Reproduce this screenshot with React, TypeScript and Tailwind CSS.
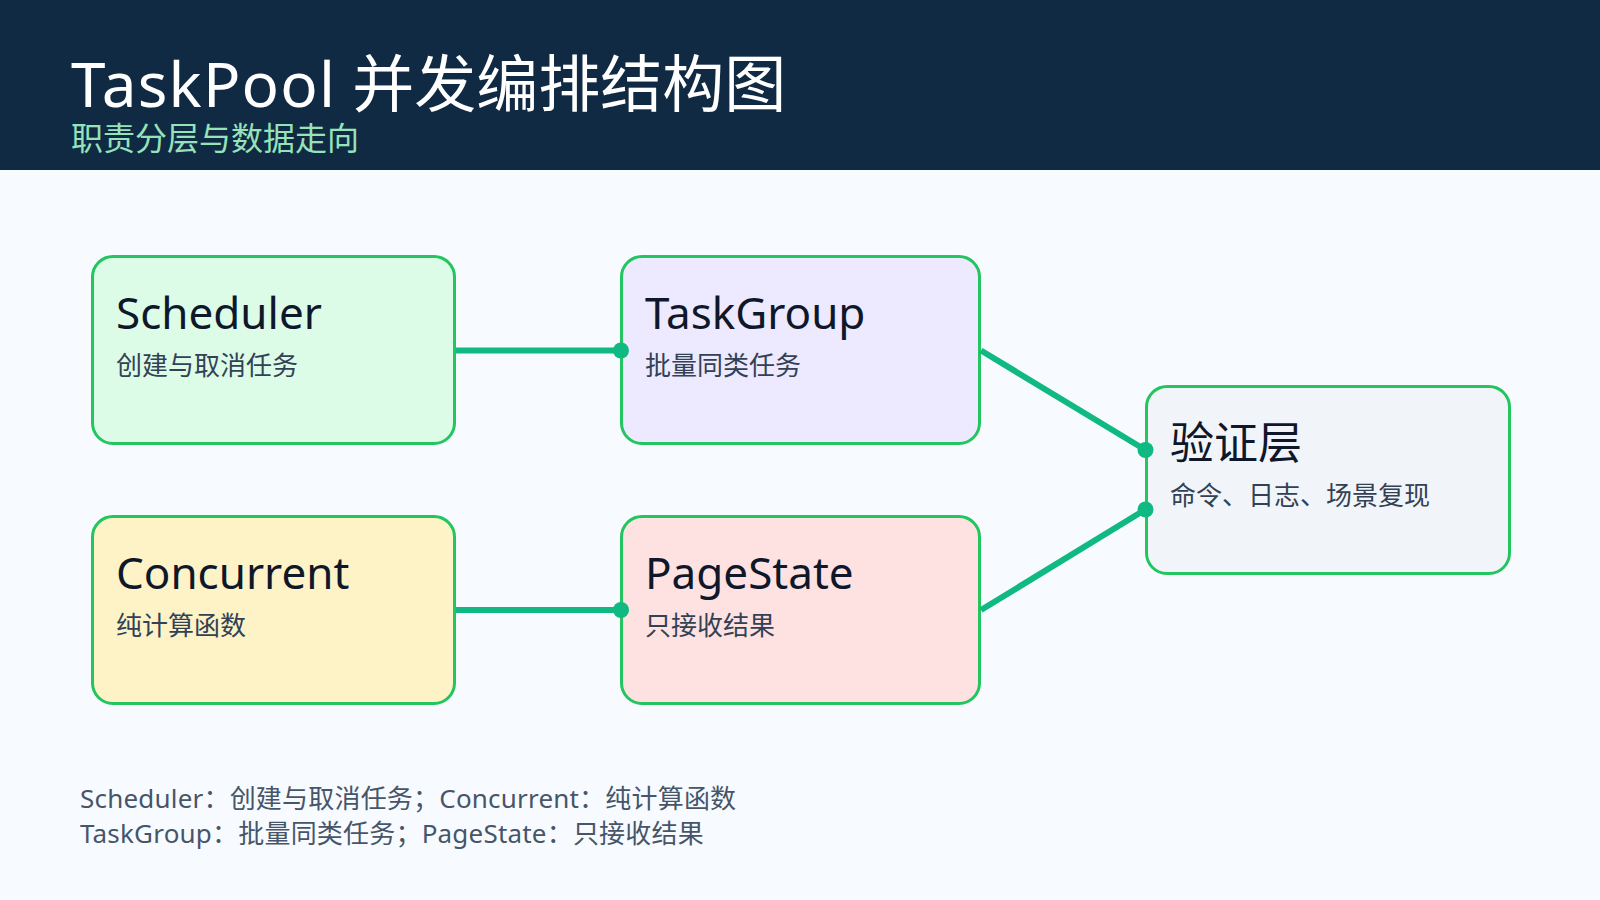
const FONT = "font-['Noto_Sans','Noto_Sans_CJK_SC',sans-serif]";

type NodeProps = {
  title: string;
  desc: string;
  className: string;
};

// 图中的单个职责节点
function Node({ title, desc, className }: NodeProps) {
  return (
    <div
      className={`h-[190px] rounded-[22px] border-[3px] border-[#22c55e] pl-[22px] pt-[32px] ${className}`}
    >
      <div className="text-[44px] leading-[44px] text-[#0f172a]">{title}</div>
      <div className="mt-[18px] text-[26px] leading-[26px] text-[#334155]">{desc}</div>
    </div>
  );
}

export default function App() {
  return (
    <div className={`min-h-[900px] w-full bg-[#f7fbff] ${FONT}`}>
      {/* 顶部标题栏 */}
      <header className="h-[170px] bg-[#102a43] pl-[71px] pt-[52px]">
        <h1 className="text-[62px] leading-[62px] text-white">
          <span className="tracking-[1.2px]">TaskPool</span> 并发编排结构图
        </h1>
        <p className="mt-[8px] text-[32px] leading-[32px] text-[#96e3bb]">职责分层与数据走向</p>
      </header>

      {/* 结构图 */}
      <div className="flex pl-[91px] pt-[85px]">
        <div className="flex w-[365px] flex-col gap-[70px]">
          <Node title="Scheduler" desc="创建与取消任务" className="bg-[#dcfce7]" />
          <Node title="Concurrent" desc="纯计算函数" className="bg-[#fef3c7]" />
        </div>

        <svg width="164" height="450" className="relative z-10 shrink-0 overflow-visible">
          <line x1="0" y1="95.5" x2="165" y2="95.5" stroke="#10b981" strokeWidth="6" />
          <circle cx="165" cy="95.5" r="8" fill="#10b981" />
          <line x1="0" y1="355" x2="165" y2="355" stroke="#10b981" strokeWidth="6" />
          <circle cx="165" cy="355" r="8" fill="#10b981" />
        </svg>

        <div className="flex w-[361px] flex-col gap-[70px]">
          <Node title="TaskGroup" desc="批量同类任务" className="bg-[#ede9fe]" />
          <Node title="PageState" desc="只接收结果" className="bg-[#fee2e2]" />
        </div>

        <svg width="164" height="450" className="relative z-10 shrink-0 overflow-visible">
          <line x1="0" y1="95.5" x2="164.5" y2="195" stroke="#10b981" strokeWidth="6" />
          <circle cx="164.5" cy="195" r="8" fill="#10b981" />
          <line x1="0" y1="355" x2="164.5" y2="254.5" stroke="#10b981" strokeWidth="6" />
          <circle cx="164.5" cy="254.5" r="8" fill="#10b981" />
        </svg>

        <div className="w-[366px] self-center">
          <Node title="验证层" desc="命令、日志、场景复现" className="bg-[#f1f5f9]" />
        </div>
      </div>

      {/* 底部说明 */}
      <div className="mt-[76px] pl-[80px] text-[26px] leading-[35px] tracking-[0.2px] text-[#475569]">
        <p>Scheduler：创建与取消任务；Concurrent：纯计算函数</p>
        <p>TaskGroup：批量同类任务；PageState：只接收结果</p>
      </div>
    </div>
  );
}
